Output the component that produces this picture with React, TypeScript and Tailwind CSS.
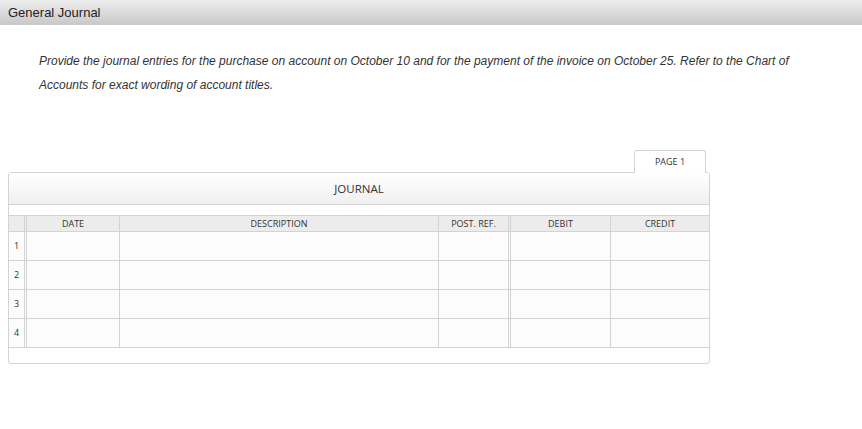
import React from 'react';

const cols = [
  { key: 'num', label: '', w: 'w-[18px] border-r-[3px] border-double' },
  { key: 'date', label: 'DATE', w: 'w-[93px] border-r' },
  { key: 'desc', label: 'DESCRIPTION', w: 'w-[319px] border-r' },
  { key: 'ref', label: 'POST. REF.', w: 'w-[72px] border-r-[3px] border-double' },
  { key: 'debit', label: 'DEBIT', w: 'w-[100px] border-r' },
  { key: 'credit', label: 'CREDIT', w: 'w-[98px]' },
];

const rows = [1, 2, 3, 4];

export default function App() {
  return (
    <div className="min-h-[429px] w-[862px] bg-white">
      {/* Title bar */}
      <div className="h-[25px] bg-gradient-to-b from-[#ededed] to-[#c8c8c8] pl-2 text-[13px] leading-[25px] text-[#222] font-['Liberation_Sans',Arial,sans-serif]">
        General Journal
      </div>

      {/* Instructions */}
      <p className="ml-[39px] mt-[24px] w-[770px] text-[12px] italic leading-[24px] text-[#333] font-['Liberation_Sans',Arial,sans-serif]">
        Provide the journal entries for the purchase on account on October 10 and for the payment of the invoice on October 25. Refer to the Chart of Accounts for exact wording of account titles.
      </p>

      {/* Journal */}
      <div className="ml-2 mt-[53px] flex w-[702px] flex-col font-['Open_Sans',sans-serif] text-[#333]">
        <div className="relative z-10 -mb-px mr-[4px] flex h-[23px] w-[72px] items-center justify-center self-end rounded-t-[3px] border border-b-0 border-[#d3d3d3] bg-white text-[9px]">
          PAGE 1
        </div>
        <div className="rounded-[3px] border border-[#d3d3d3] bg-white">
          <div className="flex h-[32px] items-center justify-center border-b border-[#d3d3d3] bg-gradient-to-b from-white to-[#f0f0f0] text-[11.5px]">
            JOURNAL
          </div>
          <div className="h-[10px]" />
          <div className="flex h-[17px] border-y border-[#d3d3d3] bg-[#ececec] text-[9px]">
            {cols.map(c => (
              <div key={c.key} className={`${c.w} flex items-center justify-center border-[#d3d3d3]`}>
                {c.label}
              </div>
            ))}
          </div>
          {rows.map(r => (
            <div key={r} className="flex h-[29px] border-b border-[#d3d3d3] bg-[#fcfcfc] text-[9px]">
              {cols.map(c => (
                <div key={c.key} className={`${c.w} flex items-center justify-center border-[#d3d3d3]`}>
                  {c.key === 'num' ? r : ''}
                </div>
              ))}
            </div>
          ))}
          <div className="h-[15px]" />
        </div>
      </div>
    </div>
  );
}
